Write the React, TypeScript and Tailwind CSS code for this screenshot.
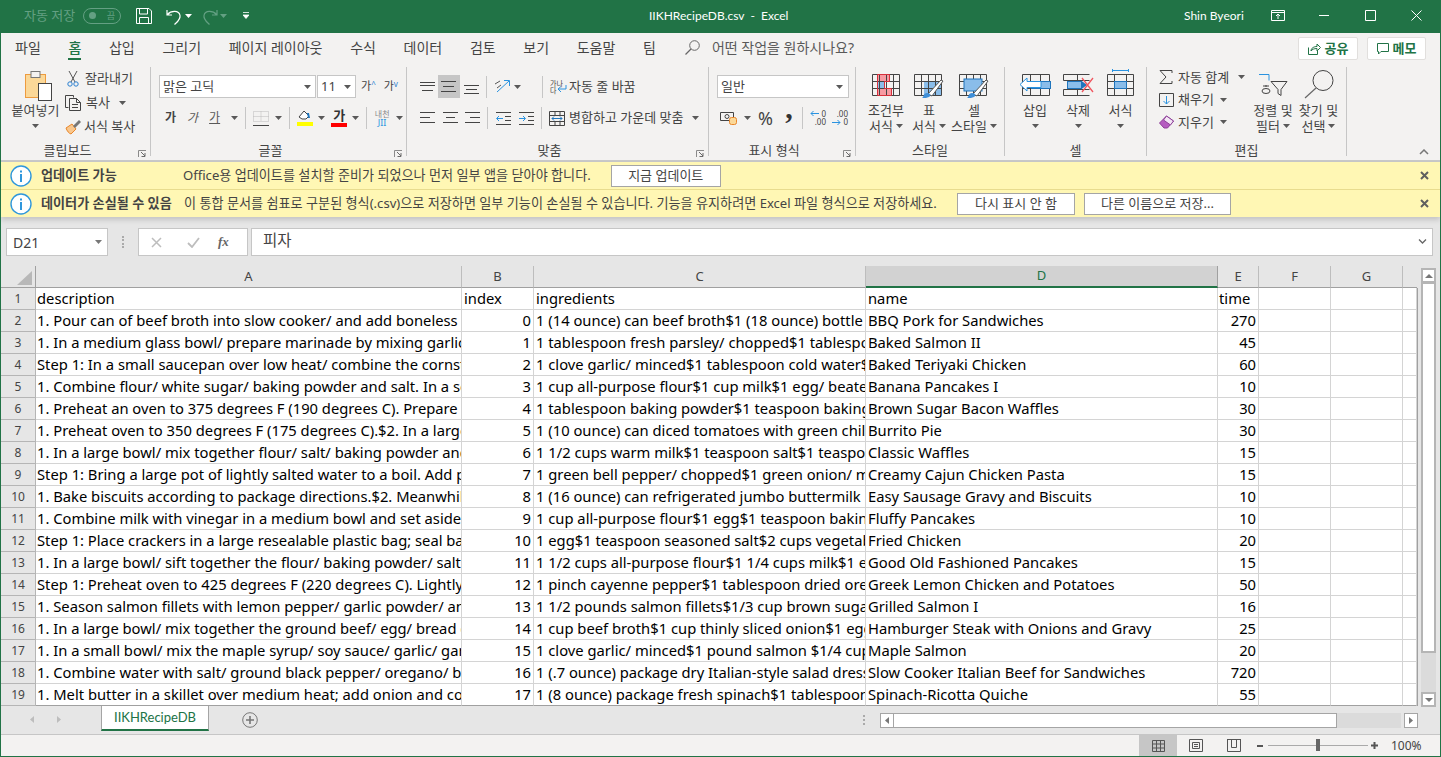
import React from "react";

const Caret = ({ c = "#595959", className = "" }: { c?: string; className?: string }) => (
  <svg width="7" height="4" viewBox="0 0 7 4" className={"shrink-0 " + className}><path d="M0 0h7L3.5 4z" fill={c} /></svg>
);

const Launcher = () => (
  <svg width="9" height="8" viewBox="0 0 9 8" className="shrink-0">
    <path d="M0.5 7V0.5H8" stroke="#8a8a8a" fill="none" />
    <path d="M3 2l4 4M7 3v3.5H3.5" stroke="#6a6a6a" fill="none" />
  </svg>
);

const Group = ({ w, label, launcher = false, children }: { w: string; label: string; launcher?: boolean; children: React.ReactNode }) => (
  <div className={w + " h-[89px] mt-px shrink-0 flex flex-col border-r border-[#c6c6c6]"}>
    <div className="h-[78px] flex">{children}</div>
    <div className={"h-[11px] flex items-center justify-center relative text-[13px] leading-[11px] text-[#444] " + (launcher ? "pr-[16px]" : "")}>
      {label}
      {launcher && <span className="absolute right-[3px] top-[5px] flex"><Launcher /></span>}
    </div>
  </div>
);

const Lines = ({ d }: { d: string }) => (
  <svg width="16" height="16" viewBox="0 0 16 16" className="shrink-0"><path d={d} stroke="#444" strokeWidth="1" fill="none" /></svg>
);

const Sep = ({ h = "h-[22px]", cls = "" }: { h?: string; cls?: string }) => <div className={"w-px shrink-0 bg-[#c6c6c6] " + h + " " + cls} />;

const TableBase = () => (
  <path d="M.5 .5h27v21H.5z M.5 7.5h27 M.5 14.5h27 M7.5 .5v21 M14.5 .5v21 M21.5 .5v21" stroke="#444" fill="none" />
);

const CondIcon = () => (
  <svg width="28" height="22" viewBox="0 0 28 22" className="shrink-0">
    <rect x="5" y="0" width="13" height="7" fill="#f79aa2" />
    <rect x="5" y="14" width="15" height="7" fill="#f79aa2" />
    <rect x="5" y="7" width="8" height="7" fill="#8abdea" />
    <TableBase />
    <path d="M5.5 .5h12v7h-5v7h7v7h-14z" stroke="#d8303c" fill="none" strokeWidth="1" />
  </svg>
);
const TableIcon = () => (
  <svg width="30" height="25" viewBox="0 0 30 25" className="shrink-0">
    <rect x="10" y="7" width="17" height="14" fill="#8abdea" />
    <TableBase />
    <path d="M14 20L27 6l2 1-11 15z" fill="#fff" stroke="#555" />
    <path d="M8 24c2-1 1-5 5-5 4 0 4 3 2 4s-4 1-7 1z" fill="#3f8fd8" />
  </svg>
);
const CellStyleIcon = () => (
  <svg width="30" height="25" viewBox="0 0 30 25" className="shrink-0">
    <TableBase />
    <rect x="5" y="5" width="18" height="12" fill="#8abdea" stroke="#1f75bd" />
    <path d="M14 20L27 6l2 1-11 15z" fill="#fff" stroke="#555" />
    <path d="M8 24c2-1 1-5 5-5 4 0 4 3 2 4s-4 1-7 1z" fill="#3f8fd8" />
  </svg>
);
const InsertIcon = () => (
  <svg width="33" height="22" viewBox="0 0 33 22" className="shrink-0">
    <path d="M3.5 .5h27v21h-27z M3.5 7.5h8 M3.5 14.5h8 M11.5 .5v21 M21.5 .5v21" stroke="#444" fill="none" />
    <rect x="12.500" y="7.500" width="19" height="7" fill="#8abdea" stroke="#1f75bd" />
    <path d="M22 7.500H8V4L1 10.500 8 17v-3.500h14z" fill="#fff" stroke="#2a93e0" />
  </svg>
);
const DeleteIcon = () => (
  <svg width="31" height="22" viewBox="0 0 31 22" className="shrink-0">
    <path d="M.5 .5h26M.5 21.500h26M.5 .5v6h26M.5 21.500v-6h26M4.500 6.500v9M14.500 .5v21" stroke="#444" fill="none" />
    <rect x="4.500" y="7.500" width="14" height="7" fill="#8abdea" stroke="#1f75bd" />
    <path d="M18 6.500l6 4.500-6 4.500z" fill="#1f75bd" />
    <path d="M19 4l11 14M30 4L19 18" stroke="#f0565f" strokeWidth="1.300" fill="none" />
  </svg>
);
const FormatIcon = () => (
  <svg width="29" height="27" viewBox="0 0 29 27" className="shrink-0">
    <path d="M6 1.500h17M6.500 0v3M22.500 0v3" stroke="#2a93e0" fill="none" />
    <path d="M1.500 5.500h26v21h-26z M1.500 12.500h26 M1.500 19.500h26 M8.500 5.500v21 M20.500 5.500v21" stroke="#444" fill="none" />
    <rect x="8.500" y="12.500" width="12" height="7" fill="#8abdea" stroke="#1f75bd" />
  </svg>
);

const Info = () => (
  <svg width="22" height="22" viewBox="0 0 22 22" className="shrink-0">
    <circle cx="11" cy="11" r="10" fill="#fff" stroke="#2f97dc" strokeWidth="1.400" />
    <rect x="10" y="9" width="2" height="8" fill="#2f97dc" />
    <rect x="10" y="5.500" width="2" height="2" fill="#2f97dc" />
  </svg>
);
const MsgClose = () => (
  <svg width="9" height="9" viewBox="0 0 9 9" className="shrink-0"><path d="M1 1l7 7M8 1L1 8" stroke="#5f5f5f" strokeWidth="2" /></svg>
);

const WIDTHS = ["w-[426px]", "w-[72px]", "w-[332px]", "w-[352px]", "w-[41px]", "w-[72px]", "w-[72px]", "w-[14px]"];
const HEADS = ["A", "B", "C", "D", "E", "F", "G", ""];

const ROWS: [string, string, string, string, string][] = [
  ["description", "index", "ingredients", "name", "time"],
  ["1. Pour can of beef broth into slow cooker/ and add boneless pork", "0", "1 (14 ounce) can beef broth$1 (18 ounce) bottle of barbeque sauce", "BBQ Pork for Sandwiches", "270"],
  ["1. In a medium glass bowl/ prepare marinade by mixing garlic and", "1", "1 tablespoon fresh parsley/ chopped$1 tablespoon olive oil", "Baked Salmon II", "45"],
  ["Step 1: In a small saucepan over low heat/ combine the cornstarch", "2", "1 clove garlic/ minced$1 tablespoon cold water$1 tablespoon", "Baked Teriyaki Chicken", "60"],
  ["1. Combine flour/ white sugar/ baking powder and salt. In a separate", "3", "1 cup all-purpose flour$1 cup milk$1 egg/ beaten$2 tablespoons", "Banana Pancakes I", "10"],
  ["1. Preheat an oven to 375 degrees F (190 degrees C). Prepare a pan", "4", "1 tablespoon baking powder$1 teaspoon baking soda$1 teaspoon", "Brown Sugar Bacon Waffles", "30"],
  ["1. Preheat oven to 350 degrees F (175 degrees C).$2. In a large skillet", "5", "1 (10 ounce) can diced tomatoes with green chile peppers", "Burrito Pie", "30"],
  ["1. In a large bowl/ mix together flour/ salt/ baking powder and sugar", "6", "1 1/2 cups warm milk$1 teaspoon salt$1 teaspoon baking powder", "Classic Waffles", "15"],
  ["Step 1: Bring a large pot of lightly salted water to a boil. Add pasta", "7", "1 green bell pepper/ chopped$1 green onion/ minced$1 tablespoon", "Creamy Cajun Chicken Pasta", "15"],
  ["1. Bake biscuits according to package directions.$2. Meanwhile/ cook", "8", "1 (16 ounce) can refrigerated jumbo buttermilk biscuits$1 pound", "Easy Sausage Gravy and Biscuits", "10"],
  ["1. Combine milk with vinegar in a medium bowl and set aside for 5", "9", "1 cup all-purpose flour$1 egg$1 teaspoon baking powder$1 teaspoon", "Fluffy Pancakes", "10"],
  ["Step 1: Place crackers in a large resealable plastic bag; seal bag and", "10", "1 egg$1 teaspoon seasoned salt$2 cups vegetable oil for frying", "Fried Chicken", "20"],
  ["1. In a large bowl/ sift together the flour/ baking powder/ salt and", "11", "1 1/2 cups all-purpose flour$1 1/4 cups milk$1 egg$1 tablespoon", "Good Old Fashioned Pancakes", "15"],
  ["Step 1: Preheat oven to 425 degrees F (220 degrees C). Lightly oil a", "12", "1 pinch cayenne pepper$1 tablespoon dried oregano$1 teaspoon", "Greek Lemon Chicken and Potatoes", "50"],
  ["1. Season salmon fillets with lemon pepper/ garlic powder/ and salt", "13", "1 1/2 pounds salmon fillets$1/3 cup brown sugar$1/3 cup soy", "Grilled Salmon I", "16"],
  ["1. In a large bowl/ mix together the ground beef/ egg/ bread crumbs", "14", "1 cup beef broth$1 cup thinly sliced onion$1 egg$1 pound", "Hamburger Steak with Onions and Gravy", "25"],
  ["1. In a small bowl/ mix the maple syrup/ soy sauce/ garlic/ garlic salt", "15", "1 clove garlic/ minced$1 pound salmon $1/4 cup maple syrup", "Maple Salmon", "20"],
  ["1. Combine water with salt/ ground black pepper/ oregano/ basil and", "16", "1 (.7 ounce) package dry Italian-style salad dressing mix", "Slow Cooker Italian Beef for Sandwiches", "720"],
  ["1. Melt butter in a skillet over medium heat; add onion and cook", "17", "1 (8 ounce) package fresh spinach$1 tablespoon olive oil", "Spinach-Ricotta Quiche", "55"],
];

const TopTab = ({ t, active }: { t: string; active?: boolean }) => (
  <div className={"relative h-[26px] flex items-center " + (active ? "text-[#217346] font-medium" : "")}>
    {t}
    {active && <div className="absolute left-0 right-0 bottom-0 h-[2px] bg-[#217346]" />}
  </div>
);

function TitleBar() {
  return (
    <div className="h-[33px] bg-[#217346] flex items-center text-white shrink-0 -mx-px pb-[2px]">
      <div className="w-[649px] flex items-center shrink-0">
        <span className="ml-[24px] w-[59px] text-[13px] text-[#64a083]">자동 저장</span>
        <div className="w-[38px] h-[16px] rounded-full border border-[#64a083] flex items-center justify-between px-[5px]">
          <div className="w-[7px] h-[7px] rounded-full bg-[#64a083]" />
          <span className="text-[9px] leading-none text-[#64a083]">끔</span>
        </div>
        <svg width="16" height="16" viewBox="0 0 16 16" className="ml-[15px]"><path d="M.5.5h12.500l2.500 2.500v12.500H.5z M3.500.5v5.500h8V.5 M3.500 15.500v-6h9v6" stroke="#fff" fill="none" /></svg>
        <svg width="16" height="18" viewBox="0 0 16 18" className="ml-[14px] translate-y-[1px]"><path d="M1 2v5h5 M1.500 6.500C5 2.500 13 2 14 7.500c.7 4-3 6.500-5.500 9" stroke="#fff" strokeWidth="1.200" fill="none" /></svg>
        <Caret c="#fff" className="ml-[3px]" />
        <svg width="16" height="18" viewBox="0 0 16 18" className="ml-[10px] translate-y-[1px]"><path d="M15 2v5h-5 M14.500 6.500C11 2.500 3 2 2 7.500c-.7 4 3 6.500 5.500 9" stroke="#64a083" strokeWidth="1.200" fill="none" /></svg>
        <Caret c="#64a083" className="ml-[2px]" />
        <svg width="6" height="7" viewBox="0 0 6 7" className="ml-[16px]"><path d="M0 .5h6M0 3h6L3 6.500z" stroke="#fff" strokeWidth=".8" fill="#fff" /></svg>
      </div>
      <div className="w-[535px] shrink-0 text-[12px] whitespace-pre" style={{ fontFamily: 'Lato, sans-serif' }}>IIKHRecipeDB.csv  -  Excel</div>
      <div className="w-[87px] shrink-0 text-[12px]" style={{ fontFamily: 'Lato, sans-serif' }}>Shin Byeori</div>
      <svg width="14" height="11" viewBox="0 0 14 11" className="shrink-0"><path d="M.5.5h13v10H.5z M.5 2.500h13 M7 9V4.500M5 6l2-2 2 2" stroke="#fff" fill="none" /></svg>
      <svg width="10" height="1" viewBox="0 0 10 1" className="ml-[34px] shrink-0"><path d="M0 .5h10" stroke="#fff" /></svg>
      <svg width="11" height="11" viewBox="0 0 11 11" className="ml-[36px] shrink-0"><path d="M.5.5h10v10H.5z" stroke="#fff" fill="none" /></svg>
      <svg width="11" height="11" viewBox="0 0 11 11" className="ml-[35px] shrink-0"><path d="M.5.500l10 10M10.500.500l-10 10" stroke="#fff" fill="none" /></svg>
    </div>
  );
}

function TabsRow() {
  return (
    <div className="h-[33px] flex items-start text-[14px] text-[#444] shrink-0 pl-[14px] pt-[1px]">
      <div className="flex gap-[27.67px] items-center">
        <TopTab t="파일" />
        <TopTab t="홈" active />
        {["삽입", "그리기", "페이지 레이아웃", "수식", "데이터", "검토", "보기", "도움말", "팀"].map((t) => <TopTab key={t} t={t} />)}
      </div>
      <svg width="15" height="15" viewBox="0 0 15 15" className="ml-[29px] mt-[6px] shrink-0"><circle cx="9.500" cy="5.500" r="4.800" stroke="#666" fill="none" /><path d="M6 9l-5.500 5.500" stroke="#666" strokeWidth="1.300" /></svg>
      <span className="ml-[12px] h-[26px] flex items-center text-[14px] text-[#595959]">어떤 작업을 원하시나요?</span>
      <div className="ml-auto flex gap-[9px] mr-[14px] mt-[3px]">
        <div className="w-[60px] h-[23px] bg-white border border-[#e1dfdd] rounded-[2px] flex items-center justify-center gap-[4px] text-[#217346] font-bold text-[13px]">
          <svg width="13" height="12" viewBox="0 0 13 12"><path d="M.5 4.500v7h9V8 M3 8c0-3 3-4.500 6-4.500V1l3.500 3.500L9 8V5.500C6 5.500 4 6.500 3 8z" stroke="#217346" fill="none" /></svg>
          공유
        </div>
        <div className="w-[59px] h-[23px] bg-white border border-[#e1dfdd] rounded-[2px] flex items-center justify-center gap-[4px] text-[#217346] font-bold text-[13px]">
          <svg width="12" height="12" viewBox="0 0 12 12"><path d="M.5.500h11v8H4L1.500 11V8.500h-1z" stroke="#217346" fill="none" /></svg>
          메모
        </div>
      </div>
    </div>
  );
}

function Clipboard() {
  return (
    <Group w="w-[150px]" label="클립보드" launcher>
      <div className="w-[63px] ml-[10px] flex flex-col items-center shrink-0">
        <svg width="30" height="32" viewBox="0 0 30 32" className="mt-[3px] ml-[3px] shrink-0 self-start translate-x-[10px]">
          <rect x="1.500" y="4.500" width="20" height="23" fill="#fbd898" stroke="#ed9b3f" />
          <rect x="7" y="1.500" width="9" height="6" fill="#f3f2f1" stroke="#777" />
          <rect x="14.500" y="13.500" width="13" height="17" fill="#fff" stroke="#444" />
        </svg>
        <div className="text-[13px] leading-[16px] w-[63px] whitespace-nowrap -translate-x-[7px] text-center">붙여넣기</div>
        <Caret className="mt-[6px] -translate-x-[7px]" />
      </div>
      <div className="flex flex-col ml-[-9px] pt-[2px] gap-[4px] text-[13px]">
        <div className="h-[20px] flex items-center">
          <svg width="12" height="16" viewBox="0 0 12 16" className="ml-[2px] mr-[6px] shrink-0"><path d="M2 0l6 11M10 0L4 11" stroke="#555" /><circle cx="3" cy="13" r="2.200" stroke="#2a7fd0" fill="none" /><circle cx="9" cy="13" r="2.200" stroke="#2a7fd0" fill="none" /></svg>
          잘라내기
        </div>
        <div className="h-[20px] flex items-center">
          <svg width="17" height="16" viewBox="0 0 17 16" className="mr-[4px] shrink-0"><path d="M.500.500h8v2M.500.500v12h3" stroke="#444" fill="none" /><path d="M4.500 3.500h7l4 4v8h-11z M11.500 3.500v4h4 M7 9.500h6M7 12.500h6" stroke="#444" fill="none" /></svg>
          복사
          <Caret className="ml-[9px]" />
        </div>
        <div className="h-[20px] flex items-center">
          <svg width="17" height="16" viewBox="0 0 17 16" className="mr-[2px] shrink-0"><path d="M1 9l6-4 4 5-5 5c-2-.500-4-3-5-6z" fill="#f9c78d" stroke="#e8862a" /><path d="M8 7l6-6 2 2-6 6z" fill="#777" /></svg>
          서식 복사
        </div>
      </div>
    </Group>
  );
}

function FontGroup() {
  return (
    <Group w="w-[256px]" label="글꼴" launcher>
      <div className="flex flex-col ml-[8px]">
        <div className="flex items-center mt-[8px] h-[23px]">
          <div className="w-[157px] h-[23px] bg-white border border-[#c6c6c6] flex items-center justify-between px-[3px] text-[13px]">맑은 고딕<Caret className="mr-[1px]" /></div>
          <div className="w-[39px] h-[23px] ml-px bg-white border border-[#c6c6c6] flex items-center justify-between px-[3px] text-[13px]">11<Caret className="mr-[1px]" /></div>
          <span className="ml-[5px] text-[11px]">가<span className="text-[#2a7fd0] align-top text-[8px]">^</span></span>
          <span className="ml-[8px] text-[11px]">가<span className="text-[#2a7fd0] align-top text-[8px]">v</span></span>
        </div>
        <div className="flex items-center mt-[8px] h-[24px] text-[12px]">
          <span className="ml-[6px] font-bold">가</span>
          <span className="ml-[11px] italic text-[#595959]">가</span>
          <span className="ml-[11px] underline text-[#595959]">가</span>
          <Caret className="ml-[11px]" />
          <Sep cls="ml-[7px]" />
          <svg width="16" height="15" viewBox="0 0 16 15" className="ml-[7px] shrink-0"><path d="M.500.500h15v10H.500z M8 .500v10 M.500 5.500h15" stroke="#bbb" strokeDasharray="1 1" fill="none" /><path d="M0 14.500h16" stroke="#444" /></svg>
          <Caret className="ml-[6px]" />
          <Sep cls="ml-[7px]" />
          <div className="ml-[7px] w-[16px] flex flex-col items-center shrink-0">
            <svg width="14" height="11" viewBox="0 0 14 11"><path d="M1 7l5-6 5 5-3 3H4z" stroke="#444" fill="#fff" /><path d="M9 3h2l1 5h-2z" fill="#1f75bd" /></svg>
            <div className="w-[16px] h-[4px] bg-[#ffff00] mt-[1px]" />
          </div>
          <Caret className="ml-[5px]" />
          <div className="ml-[6px] w-[16px] flex flex-col items-center shrink-0 font-bold leading-[11px] text-[13px] text-[#333]">
            가
            <div className="w-[16px] h-[4px] bg-[#f00] mt-[2px]" />
          </div>
          <Caret className="ml-[5px]" />
          <Sep cls="ml-[7px]" />
          <div className="ml-[6px] w-[18px] text-[8px] leading-[9px] text-[#8a8a8a] text-center shrink-0">내천<div className="text-[#2a93e0] text-[9px]">JII</div></div>
          <Caret className="ml-[5px]" />
        </div>
      </div>
    </Group>
  );
}

function AlignGroup() {
  return (
    <Group w="w-[302px]" label="맞춤" launcher>
      <div className="flex flex-col ml-[13px]">
        <div className="flex items-center mt-[8px] h-[23px]">
          <Lines d="M0 3.500h15M0 6.500h15M2 11.500h11" />
          <div className="ml-[2px] w-[22px] h-[23px] bg-[#c6c6c6] flex items-center justify-center"><Lines d="M0 2.500h15M2 7.500h11M0 12.500h15" /></div>
          <div className="ml-[4px] flex"><Lines d="M0 6.500h15M2 10.500h11M0 14.500h15" /></div>
          <Sep cls="ml-[6px]" />
          <svg width="17" height="15" viewBox="0 0 17 15" className="ml-[7px] shrink-0"><path d="M3 13L15 2M10 1.500h5.500V7" stroke="#2a93e0" fill="none" /><path d="M1 5l5-3M3 9l4-3" stroke="#555" /></svg>
          <Caret className="ml-[3px]" />
          <Sep cls="ml-[21px]" />
          <div className="ml-[7px] w-[17px] text-[7px] leading-[7px] text-[#444] shrink-0 relative">가나<br />다<svg width="10" height="9" viewBox="0 0 10 9" className="absolute right-0 bottom-0"><path d="M9 0v4H2M4 1.500L1 4l3 3" stroke="#2a93e0" fill="none" /></svg></div>
          <span className="ml-[2px] text-[13px] whitespace-nowrap">자동 줄 바꿈</span>
        </div>
        <div className="flex items-center mt-[8px] h-[24px]">
          <Lines d="M0 2.500h15M0 7.500h10M0 12.500h15" />
          <div className="ml-[7px] flex"><Lines d="M0 2.500h15M3 7.500h9M0 12.500h15" /></div>
          <div className="ml-[6px] flex"><Lines d="M0 2.500h15M5 7.500h10M0 12.500h15" /></div>
          <Sep cls="ml-[6px]" />
          <svg width="15" height="13" viewBox="0 0 15 13" className="ml-[8px] shrink-0"><path d="M0 .500h15M0 12.500h15M9 4.500h6M9 8.500h6" stroke="#444" /><path d="M7 6.500H1M3 4L.500 6.500 3 9" stroke="#2a93e0" fill="none" /></svg>
          <svg width="15" height="13" viewBox="0 0 15 13" className="ml-[8px] shrink-0"><path d="M0 .500h15M0 12.500h15M9 4.500h6M9 8.500h6" stroke="#444" /><path d="M0 6.500h6M4 4l2.500 2.500L4 9" stroke="#2a93e0" fill="none" /></svg>
          <Sep cls="ml-[7px]" />
          <svg width="17" height="15" viewBox="0 0 17 15" className="ml-[7px] shrink-0"><path d="M.500.500h15v14H.500z M.500 4.500h15 M.500 10.500h15 M6 .500v4 M11 .500v4 M6 10.500v4 M11 10.500v4" stroke="#444" fill="none" /><path d="M3 7.500h10M5 5.500l-2 2 2 2M11 5.500l2 2-2 2" stroke="#1f75bd" fill="none" /></svg>
          <span className="ml-[3px] text-[13px] whitespace-nowrap">병합하고 가운데 맞춤</span>
          <Caret className="ml-[9px]" />
        </div>
      </div>
    </Group>
  );
}

function NumberGroup() {
  return (
    <Group w="w-[147px]" label="표시 형식" launcher>
      <div className="flex flex-col ml-[8px]">
        <div className="w-[132px] mt-[8px] h-[23px] bg-white border border-[#c6c6c6] flex items-center justify-between px-[3px] text-[13px]">일반<Caret className="mr-[2px]" /></div>
        <div className="flex items-center mt-[8px] h-[24px]">
          <svg width="17" height="14" viewBox="0 0 17 14" className="ml-[3px] shrink-0"><path d="M.500 1.500h13v8H.500z" stroke="#444" fill="none" /><circle cx="7" cy="5.500" r="2" stroke="#444" fill="none" /><rect x="9.500" y="6.500" width="7" height="7" rx="2" fill="#fbd898" stroke="#e8862a" /></svg>
          <Caret className="ml-[7px]" />
          <span className="ml-[6px] w-[17px] text-[18px] leading-none text-center shrink-0">%</span>
          <span className="ml-[10px] w-[10px] h-[24px] flex items-start justify-center text-[30px] font-bold leading-[4px] text-[#333] shrink-0" style={{ fontFamily: '"Liberation Serif", serif' }}>,</span>
          <Sep cls="ml-[8px]" />
          <div className="ml-[7px] w-[16px] text-[8px] leading-[8px] text-right relative shrink-0">0<br />.00<svg width="9" height="7" viewBox="0 0 9 7" className="absolute left-0 top-0"><path d="M9 3.500H1M3.500 1L1 3.500 3.500 6" stroke="#2a93e0" fill="none" /></svg></div>
          <div className="ml-[6px] w-[16px] text-[8px] leading-[8px] text-right relative shrink-0">.00<br />0<svg width="9" height="7" viewBox="0 0 9 7" className="absolute left-0 bottom-0"><path d="M0 3.500h8M5.500 1L8 3.500 5.500 6" stroke="#2a93e0" fill="none" /></svg></div>
        </div>
      </div>
    </Group>
  );
}

const BigBtn = ({ w, icon, l1, l2, caretOnly = false, top = "mt-[7px]", ih = "h-[25px]" }: { w: string; icon: React.ReactNode; l1: string; l2?: string; caretOnly?: boolean; top?: string; ih?: string }) => (
  <div className={w + " flex flex-col items-center shrink-0 text-[13px] leading-[16px]"}>
    <div className={top + " " + ih + " flex items-start justify-center"}>{icon}</div>
    <div className="mt-[3px] whitespace-nowrap h-[16px]">{l1}</div>
    {caretOnly ? <Caret className="mt-[6px]" /> : <div className="flex items-center whitespace-nowrap gap-[3px]">{l2}<Caret /></div>}
  </div>
);

function Styles() {
  return (
    <Group w="w-[149px]" label="스타일">
      <div className="flex ml-[8px]">
        <BigBtn w="w-[44px]" icon={<CondIcon />} l1="조건부" l2="서식" />
        <BigBtn w="w-[42px]" icon={<TableIcon />} l1="표" l2="서식" />
        <BigBtn w="w-[48px]" icon={<CellStyleIcon />} l1="셀" l2="스타일" />
      </div>
    </Group>
  );
}

function Cells() {
  return (
    <Group w="w-[142px]" label="셀">
      <div className="flex ml-[9px]">
        <BigBtn w="w-[42px]" icon={<InsertIcon />} l1="삽입" caretOnly />
        <BigBtn w="w-[44px]" icon={<DeleteIcon />} l1="삭제" caretOnly />
        <BigBtn w="w-[41px]" icon={<FormatIcon />} l1="서식" caretOnly top="mt-[2px]" ih="h-[30px]" />
      </div>
    </Group>
  );
}

export default function App() {
  return (
    <div className="w-[1441px] h-[757px] overflow-hidden bg-[#f3f2f1] flex flex-col border-x border-b border-[#217346] text-[#444]" style={{ fontFamily: '"Noto Sans", "Noto Sans CJK KR", sans-serif' }}>
      <TitleBar />
      <TabsRow />
      <div className="h-[96px] flex shrink-0 relative border-b-2 border-[#c9c9c9]">
        <Clipboard />
        <FontGroup />
        <AlignGroup />
        <NumberGroup />
        <Styles />
        <Cells />
        <Group w="w-[200px]" label="편집">
          <div className="flex flex-col w-[103px] pl-[12px] -mt-px text-[13px] shrink-0">
            <div className="h-[22.5px] flex items-center">
              <svg width="14" height="14" viewBox="0 0 14 14" className="shrink-0 mr-[5px]"><path d="M13 3V.500H1l6 6.500-6 6.500h12V11" stroke="#444" fill="none" /></svg>
              자동 합계<Caret className="ml-[9px]" />
            </div>
            <div className="h-[22.5px] flex items-center">
              <svg width="15" height="14" viewBox="0 0 15 14" className="shrink-0 mr-[4px]"><path d="M.500.500h14v13H.500z" stroke="#444" fill="none" /><path d="M7.500 3v8M4.500 8l3 3 3-3" stroke="#2a93e0" fill="none" /></svg>
              채우기<Caret className="ml-[6px]" />
            </div>
            <div className="h-[22.5px] flex items-center">
              <svg width="15" height="14" viewBox="0 0 15 14" className="shrink-0 mr-[4px]"><path d="M.500 8l7-7 7 5-6 7H5z" fill="#b55dc0" stroke="#8d3e98" /><path d="M7.500 1l7 5-3 4-7-5z" fill="#f3e6f5" stroke="#8d3e98" /></svg>
              지우기<Caret className="ml-[6px]" />
            </div>
          </div>
          <BigBtn w="w-[46px]" top="mt-[7px]" ih="h-[25px]" icon={
            <svg width="30" height="22" viewBox="0 0 30 22"><path d="M1 .500h10v6" stroke="#2a93e0" fill="none" /><path d="M5 12h6M8 11v2" stroke="#444" /><ellipse cx="8" cy="17" rx="4" ry="2.500" stroke="#444" fill="none" /><path d="M13 7.500h16l-6 8v6l-3-2v-4z" stroke="#444" fill="none" /></svg>
          } l1="정렬 및" l2="필터" />
          <BigBtn w="w-[45px]" top="mt-[3px]" ih="h-[29px]" icon={
            <svg width="30" height="29" viewBox="0 0 30 29"><circle cx="19" cy="10.500" r="10" stroke="#444" fill="none" /><path d="M12 18L1 28" stroke="#666" strokeWidth="1.200" /></svg>
          } l1="찾기 및" l2="선택" />
        </Group>
        <svg width="10" height="6" viewBox="0 0 10 6" className="absolute right-[11px] bottom-[5px]"><path d="M1 5l4-4 4 4" stroke="#777" strokeWidth="1.500" fill="none" /></svg>
      </div>

      <div className="relative z-10 shrink-0 shadow-[0_3px_5px_rgba(0,0,0,0.15)] bg-[#fff7b4] text-[13.1px] text-[#444]">
        <div className="h-[28px] flex items-center border-b border-[#e8dc8e]">
          <div className="ml-[9px] flex"><Info /></div>
          <span className="ml-[9px] w-[142px] font-bold">업데이트 가능</span>
          <span className="whitespace-nowrap">Office용 업데이트를 설치할 준비가 되었으나 먼저 일부 앱을 닫아야 합니다.</span>
          <button className="ml-[20px] w-[110px] h-[22px] bg-white border border-[#a5a5a5] text-[13px] text-[#444]">지금 업데이트</button>
          <div className="ml-auto mr-[11px] flex"><MsgClose /></div>
        </div>
        <div className="h-[27px] flex items-center">
          <div className="ml-[9px] flex"><Info /></div>
          <span className="ml-[9px] w-[143px] font-bold whitespace-nowrap">데이터가 손실될 수 있음</span>
          <span className="whitespace-nowrap">이 통합 문서를 쉼표로 구분된 형식(.csv)으로 저장하면 일부 기능이 손실될 수 있습니다. 기능을 유지하려면 Excel 파일 형식으로 저장하세요.</span>
          <button className="ml-auto w-[118px] h-[22px] bg-white border border-[#a5a5a5] text-[13px] text-[#444]">다시 표시 안 함</button>
          <button className="ml-[9px] w-[147px] h-[22px] bg-white border border-[#a5a5a5] text-[13px] text-[#444]">다른 이름으로 저장...</button>
          <div className="ml-[189px] mr-[11px] flex"><MsgClose /></div>
        </div>
      </div>

      <div className="flex-1 min-h-0 bg-[#e6e6e6] flex flex-col">
        <div className="h-[28px] mt-[11px] flex items-center shrink-0 text-[#444]">
          <div className="ml-[5px] w-[102px] h-[28px] bg-white border border-[#c6c6c6] flex items-center justify-between pl-[6px] pr-[5px] text-[14px]">D21<Caret c="#777" /></div>
          <div className="ml-[14px] w-[3px] h-[12px] border-l-2 border-dotted border-[#aaa]" />
          <div className="ml-[13px] w-[110px] h-[28px] bg-white border border-[#c6c6c6] flex items-center shrink-0">
            <svg width="11" height="11" viewBox="0 0 11 11" className="ml-[12px]"><path d="M1 1l9 9M10 1l-9 9" stroke="#bdbdbd" strokeWidth="1.500" /></svg>
            <svg width="13" height="11" viewBox="0 0 13 11" className="ml-[25px]"><path d="M1 6l4 4 7-9" stroke="#bdbdbd" strokeWidth="1.800" fill="none" /></svg>
            <span className="ml-[18px] text-[13px] italic font-bold text-[#666]" style={{ fontFamily: '"Liberation Serif", serif' }}>fx</span>
          </div>
          <div className="ml-[3px] flex-1 h-[28px] mr-[7px] bg-white border border-[#c6c6c6] flex items-center pl-[11px] pr-[5px] pb-[2px] justify-between text-[15.5px]">피자
            <svg width="9" height="5" viewBox="0 0 9 5"><path d="M1 .500l3.500 3.500L8 .500" stroke="#666" strokeWidth="1.300" fill="none" /></svg>
          </div>
        </div>

        <div className="flex mt-[10px] shrink-0 h-[440px]">
          <div className="w-[1417px] shrink-0 flex flex-col">
            <div className="h-[22px] flex shrink-0 text-[13px] text-[#444]">
              <div className="w-[35px] border-r border-b border-[#a0a0a0] shrink-0 flex justify-end items-end pr-[3px] pb-[2px]">
                <svg width="15" height="14" viewBox="0 0 15 14"><path d="M15 0v14H0z" fill="#b8b8b8" /></svg>
              </div>
              {HEADS.map((h, i) => (
                <div key={i} className={WIDTHS[i] + " shrink-0 flex items-center justify-center " + (h === "" ? "border-b border-b-[#a0a0a0]" : h === "D" ? "bg-[#d2d2d2] border-r border-b-2 border-b-[#217346] text-[#217346] border-r-[#a0a0a0]" : "border-r border-b border-b-[#a0a0a0] border-r-[#bdbdbd]")}>{h}</div>
              ))}
            </div>
            <div className="bg-white border-r border-[#a0a0a0]">
              {ROWS.map((r, ri) => (
                <div key={ri} className="h-[22px] flex">
                  <div className="w-[35px] shrink-0 bg-[#e6e6e6] border-r border-b border-[#b5b5b5] text-[12px] flex items-center justify-center text-[#444]">{ri + 1}</div>
                  {WIDTHS.map((w, ci) => {
                    const v = r[ci] ?? "";
                    const right = ri > 0 && (ci === 1 || ci === 4);
                    const last = ri === ROWS.length - 1;
                    return (
                      <div key={ci} className={w + " shrink-0 overflow-hidden whitespace-nowrap text-[14.75px] leading-[21px] text-black pr-[2px] border-r border-r-[#d4d4d4] border-b " + (ci === 0 || ci === 4 ? "pl-px " : "pl-[2px] ") + (last ? "border-b-[#a0a0a0] " : "border-b-[#d4d4d4] ") + (right ? "text-right" : "")}>{v}</div>
                    );
                  })}
                </div>
              ))}
            </div>
          </div>
          <div className="ml-[3px] w-[15px] shrink-0 mt-[2px] flex flex-col h-[439px]">
            <div className="h-[15px] shrink-0 bg-white border-2 border-[#b5b5b5] flex items-center justify-center"><svg width="8" height="4" viewBox="0 0 8 4"><path d="M0 4h8L4 0z" fill="#777" /></svg></div>
            <div className="h-[370px] shrink-0 bg-white border-2 border-t border-[#b5b5b5]" />
            <div className="flex-1 bg-[#dbdbdb]" />
            <div className="h-[15px] shrink-0 bg-white border-2 border-[#b5b5b5] flex items-center justify-center"><svg width="8" height="4" viewBox="0 0 8 4"><path d="M0 0h8L4 4z" fill="#777" /></svg></div>
          </div>
        </div>

        <div className="h-[29px] flex shrink-0 border-b border-[#c6c6c6] text-[#444]">
          <svg width="4" height="7" viewBox="0 0 4 7" className="ml-[29px] mt-[10px]"><path d="M4 0v7L0 3.500z" fill="#bdbdbd" /></svg>
          <svg width="4" height="7" viewBox="0 0 4 7" className="ml-[23px] mt-[10px]"><path d="M0 0v7l4-3.500z" fill="#bdbdbd" /></svg>
          <div className="ml-[40px] w-[108px] h-[25px] bg-white border-x border-[#a5a5a5] border-b-2 border-b-[#217346] flex items-center justify-center text-[13px] text-[#217346]" style={{ fontFamily: 'Lato, sans-serif' }}>IIKHRecipeDB</div>
          <svg width="16" height="16" viewBox="0 0 16 16" className="ml-[33px] mt-[6px] shrink-0"><circle cx="8" cy="8" r="7.300" stroke="#777" fill="none" /><path d="M8 4v8M4 8h8" stroke="#777" strokeWidth="1.600" /></svg>
          <div className="ml-[605px] w-[2px] h-[10px] mt-[9px] border-l-2 border-dotted border-[#aaa]" />
          <div className="ml-[15px] w-[539px] h-[15px] mt-[7px] flex">
            <div className="w-[14px] bg-white border border-[#a5a5a5] flex items-center justify-center shrink-0"><svg width="4" height="7" viewBox="0 0 4 7"><path d="M4 0v7L0 3.500z" fill="#777" /></svg></div>
            <div className="w-[443px] bg-white border-y border-r border-[#a5a5a5] shrink-0" />
            <div className="flex-1 bg-[#dbdbdb]" />
            <div className="w-[14px] ml-[3px] mr-px bg-white border border-[#a5a5a5] flex items-center justify-center shrink-0"><svg width="4" height="7" viewBox="0 0 4 7"><path d="M0 0v7l4-3.500z" fill="#777" /></svg></div>
          </div>
        </div>

        <div className="flex-1 bg-[#f3f2f1] flex justify-end items-center text-[#444] pr-[20px]">
          <div className="w-[38px] h-full bg-[#c6c6c6] flex items-center justify-center">
            <svg width="13" height="12" viewBox="0 0 13 12"><path d="M.500.500h12v11H.500z M.500 4h12 M.500 8h12 M4.500.500v11 M8.500.500v11" stroke="#555" fill="none" /></svg>
          </div>
          <svg width="14" height="13" viewBox="0 0 14 13" className="ml-[12px]"><path d="M.500.500h13v12H.500z" stroke="#555" fill="none" /><path d="M3.500 3.500h7v6h-7z M5 5.500h4M5 7.500h4" stroke="#555" fill="none" /></svg>
          <svg width="14" height="13" viewBox="0 0 14 13" className="ml-[24px]"><path d="M.500 0v12.500h13V0M.500.500h13M4.500 0v8.500h5V0" stroke="#555" fill="none" /></svg>
          <svg width="6" height="2" viewBox="0 0 6 2" className="ml-[16px]"><path d="M0 1h6" stroke="#555" strokeWidth="2" /></svg>
          <div className="ml-[5px] w-[100px] h-px bg-[#aaa] relative shrink-0">
            <div className="absolute left-[48px] -top-[6px] w-[4px] h-[12px] bg-[#666]" />
          </div>
          <svg width="7" height="7" viewBox="0 0 7 7" className="ml-[3px]"><path d="M3.500 0v7M0 3.500h7" stroke="#555" strokeWidth="2" /></svg>
          <span className="ml-[13px] w-[29px] text-[12px]">100%</span>
        </div>
      </div>
    </div>
  );
}
